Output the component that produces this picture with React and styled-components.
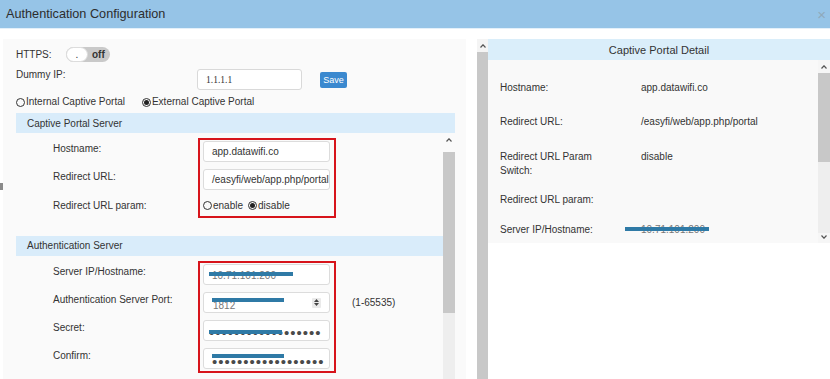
import React from "react";
import styled, { createGlobalStyle } from "styled-components";

const GlobalStyle = createGlobalStyle`
  html, body {
    margin: 0;
    padding: 0;
    background: #fff;
  }
  body {
    font-family: "Liberation Sans", Arial, sans-serif;
    color: #333;
  }
`;

const Modal = styled.div`
  position: relative;
  width: 830px;
  height: 379px;
  overflow: hidden;
  background: #fff;
  display: flex;
  flex-direction: column;
`;

const Header = styled.header`
  height: 28px;
  flex: none;
  background: #96c4e7;
  border-bottom: 1px solid #e3f0fa;
  display: flex;
  align-items: center;
  justify-content: space-between;
  padding: 0 4px 0 6px;
`;

const Title = styled.h1`
  margin: 0;
  font-size: 12.7px;
  font-weight: normal;
  color: #2d2d2d;
`;

const Close = styled.span`
  font-size: 15px;
  line-height: 1;
  color: #8fa9bb;
`;

const Body = styled.div`
  flex: 1;
  min-height: 0;
  display: flex;
  padding: 10px 0 0 3px;
`;

const LeftPanel = styled.section`
  width: 463px;
  flex: none;
  background: #fafafa;
  padding: 8px 11px 0 13px;
  box-sizing: border-box;
  display: flex;
  flex-direction: column;
`;

const TopRow = styled.div`
  display: flex;
  align-items: center;
  margin-top: ${(p) => p.$mt || 0}px;
  height: ${(p) => p.$h}px;
  font-size: 10px;
`;

const TopLabel = styled.span`
  width: ${(p) => p.$w}px;
  flex: none;
  align-self: ${(p) => (p.$top ? "flex-start" : "center")};
  line-height: 12px;
`;

const Toggle = styled.span`
  width: 44px;
  height: 15px;
  border-radius: 8px;
  background: #c9c9c9;
  display: flex;
  align-items: center;
  font-size: 10px;
  font-weight: bold;
  color: #333;
`;

const Knob = styled.span`
  width: 22px;
  height: 15px;
  box-sizing: border-box;
  border: 1px solid #dcdcdc;
  border-radius: 8px;
  background: #fff;
  display: flex;
  justify-content: center;
  align-items: flex-end;
  padding-bottom: 2px;
  line-height: 8px;
  font-weight: normal;
  margin-right: 4px;
`;

const PlainInput = styled.div`
  width: 105px;
  height: 21px;
  box-sizing: border-box;
  border: 1px solid #d9d9d9;
  border-radius: 3px;
  background: #fff;
  padding: 0 8px;
  display: flex;
  align-items: center;
  font-family: "Liberation Serif", "Times New Roman", serif;
  font-size: 9.5px;
  color: #333;
`;

const SaveButton = styled.button`
  margin-left: 18px;
  width: 27px;
  height: 16px;
  padding: 0;
  border: none;
  border-radius: 2px;
  background: #3b89cf;
  color: #fff;
  font-family: inherit;
  font-size: 9px;
`;

const RadioGroup = styled.div`
  display: flex;
  align-items: center;
  gap: ${(p) => p.$gap}px;
  font-size: 10px;
  line-height: 12px;
`;

const RadioItem = styled.span`
  display: inline-flex;
  align-items: center;
`;

const RadioDot = styled.span`
  width: 9px;
  height: 9px;
  box-sizing: border-box;
  border: 1px solid #333;
  border-radius: 50%;
  display: inline-flex;
  align-items: center;
  justify-content: center;
  margin-right: 1px;

  &::after {
    content: "";
    width: 5px;
    height: 5px;
    border-radius: 50%;
    background: ${(p) => (p.$checked ? "#222" : "transparent")};
  }
`;

const SectionHead = styled.div`
  height: 20px;
  flex: none;
  margin-top: ${(p) => p.$mt || 0}px;
  background: #d9ecfa;
  padding-left: 11px;
  display: flex;
  align-items: center;
  font-size: 10px;
  color: #333;
`;

const ScrollArea = styled.div`
  flex: 1;
  min-height: 0;
  display: flex;
  overflow: hidden;
`;

const ScrollContent = styled.div`
  flex: 1;
  padding-top: 8px;
  display: flex;
  flex-direction: column;
`;

const ScrollBar = styled.div`
  width: ${(p) => p.$w || 12}px;
  flex: none;
  display: flex;
  flex-direction: column;
`;

const ArrowBtn = styled.div`
  height: ${(p) => p.$h}px;
  flex: none;
  background: ${(p) => p.$bg || "#f6f6f6"};
  display: flex;
  justify-content: center;
  align-items: ${(p) => (p.$down ? "flex-end" : "flex-start")};
  padding: ${(p) => (p.$down ? "0 0 4px" : "5px 0 0")};
  box-sizing: border-box;
`;

const Thumb = styled.div`
  height: ${(p) => p.$h}px;
  flex: ${(p) => (p.$h ? "none" : "1")};
  background: #c8c8c8;
`;

const Track = styled.div`
  flex: 1;
  background: #eeeeee;
`;

const Group = styled.div`
  display: grid;
  grid-template-columns: 182px 138px auto;
  grid-template-rows: ${(p) => p.$rows};
  row-gap: 7.3px;
  margin-top: ${(p) => p.$mt || 0}px;
`;

const FieldLabel = styled.span`
  grid-column: 1;
  padding-left: 37px;
  font-size: 10px;
  line-height: 12px;
  padding-top: 2px;
  white-space: nowrap;
`;

const Outline = styled.div`
  grid-column: 2;
  grid-row: 1 / -1;
  border: 2px solid #d7141b;
  margin: -3px 0 -4px 0;
  pointer-events: none;
`;

const Field = styled.div`
  grid-column: 2;
  position: relative;
  margin-left: 5px;
  width: 127px;
  height: 21px;
  box-sizing: border-box;
  border: 1px solid #dcdcdc;
  border-radius: 3px;
  background: #fff;
  padding-left: ${(p) => p.$pl || 8}px;
  display: flex;
  align-items: center;
  overflow: hidden;
  white-space: nowrap;
  font-size: 10px;
  color: #333;
`;

const RadioCell = styled.div`
  grid-column: 2;
  margin-left: 5px;
  display: flex;
  align-items: center;
`;

const Dots = styled.span`
  font-size: 15px;
  letter-spacing: 1px;
  color: #4a4a4a;
  padding-top: ${(p) => p.$pt || 4}px;
`;

const Faint = styled.span`
  color: #777;
  padding-top: ${(p) => p.$pt || 0}px;
`;

const Redact = styled.span`
  position: absolute;
  left: ${(p) => p.$l}px;
  top: ${(p) => p.$t}px;
  width: ${(p) => p.$w}px;
  height: 4px;
  background: #2f7aa6;
`;

const Spinner = styled.span`
  position: absolute;
  right: 8px;
  top: 5px;
  width: 9px;
  height: 10px;
  background: #eaeaea;
  border-radius: 1px;
  display: flex;
  flex-direction: column;
  align-items: center;
  justify-content: center;
  gap: 1px;
`;

const Hint = styled.span`
  grid-column: 3;
  margin-left: 16px;
  font-size: 10px;
  align-self: center;
`;

const RightWrap = styled.div`
  flex: 1;
  display: flex;
  margin-left: 11px;
`;

const Detail = styled.section`
  flex: 1;
  display: flex;
  flex-direction: column;
`;

const DetailHead = styled.div`
  height: 21px;
  flex: none;
  background: #daeefa;
  display: flex;
  align-items: center;
  justify-content: center;
  font-size: 11px;
  color: #333;
`;

const DetailBox = styled.div`
  height: 183px;
  flex: none;
  background: #f9f9f9;
  display: flex;
  overflow: hidden;
`;

const DetailRows = styled.div`
  flex: 1;
  padding: 11px 0 0 12px;
`;

const DetailRow = styled.div`
  display: grid;
  grid-template-columns: 120px 1fr;
  column-gap: 21px;
  padding: ${(p) => p.$pt}px 0 ${(p) => p.$pb}px;
  font-size: 10px;
  line-height: 14px;
  color: #333;
`;

const DetailValue = styled.span`
  position: relative;
`;

const Grip = styled.span`
  position: absolute;
  left: 0;
  top: 183px;
  width: 3px;
  height: 7px;
  background: #8a8a8a;
`;

const Caret = ({ down }) => (
  <svg width="6" height="4" viewBox="0 0 6 4">
    <polyline
      points={down ? "0.5,0.5 3,3.2 5.5,0.5" : "0.5,3.5 3,0.8 5.5,3.5"}
      fill="none"
      stroke="#555"
      strokeWidth="1.2"
    />
  </svg>
);

const Radio = ({ checked, children }) => (
  <RadioItem>
    <RadioDot $checked={checked} />
    {children}
  </RadioItem>
);

const details = [
  { label: "Hostname:", value: "app.datawifi.co", pt: 10, pb: 10 },
  { label: "Redirect URL:", value: "/easyfi/web/app.php/portal", pt: 10, pb: 10 },
  { label: "Redirect URL Param Switch:", value: "disable", pt: 11, pb: 7 },
  { label: "Redirect URL param:", value: "", pt: 8, pb: 8 },
  { label: "Server IP/Hostname:", value: "redacted", pt: 8, pb: 8 },
];

const DOTS = "••••••••••••••••••";

const App = () => {
  return (
    <Modal>
      <GlobalStyle />
      <Header>
        <Title>Authentication Configuration</Title>
        <Close>×</Close>
      </Header>
      <Body>
        <LeftPanel>
          <TopRow $h={15}>
            <TopLabel $w={50}>HTTPS:</TopLabel>
            <Toggle>
              <Knob>.</Knob>
              off
            </Toggle>
          </TopRow>
          <TopRow $h={21} $mt={7}>
            <TopLabel $w={181} $top>
              Dummy IP:
            </TopLabel>
            <PlainInput>1.1.1.1</PlainInput>
            <SaveButton>Save</SaveButton>
          </TopRow>
          <TopRow $h={12} $mt={6}>
            <RadioGroup $gap={17}>
              <Radio>Internal Captive Portal</Radio>
              <Radio checked>External Captive Portal</Radio>
            </RadioGroup>
          </TopRow>
          <SectionHead $mt={5}>Captive Portal Server</SectionHead>
          <ScrollArea>
            <ScrollContent>
              <Group $rows="21px 21px 16px">
                <Outline />
                <FieldLabel style={{ gridRow: 1 }}>Hostname:</FieldLabel>
                <Field style={{ gridRow: 1 }}>app.datawifi.co</Field>
                <FieldLabel style={{ gridRow: 2 }}>Redirect URL:</FieldLabel>
                <Field style={{ gridRow: 2 }}>/easyfi/web/app.php/portal</Field>
                <FieldLabel style={{ gridRow: 3 }}>Redirect URL param:</FieldLabel>
                <RadioCell style={{ gridRow: 3 }}>
                  <RadioGroup $gap={5}>
                    <Radio>enable</Radio>
                    <Radio checked>disable</Radio>
                  </RadioGroup>
                </RadioCell>
              </Group>
              <SectionHead $mt={22}>Authentication Server</SectionHead>
              <Group $rows="21px 21px 21px 21px" $mt={8}>
                <Outline />
                <FieldLabel style={{ gridRow: 1 }}>Server IP/Hostname:</FieldLabel>
                <Field style={{ gridRow: 1 }}>
                  <Faint $pt={3}>10.71.101.200</Faint>
                  <Redact $l={5} $t={7} $w={84} />
                </Field>
                <FieldLabel style={{ gridRow: 2 }}>
                  Authentication Server Port:
                </FieldLabel>
                <Field style={{ gridRow: 2 }} $pl={9}>
                  <Faint $pt={6}>1812</Faint>
                  <Redact $l={8} $t={5} $w={72} />
                  <Spinner>
                    <svg width="5" height="3" viewBox="0 0 5 3">
                      <polygon points="0,3 2.5,0 5,3" fill="#444" />
                    </svg>
                    <svg width="5" height="3" viewBox="0 0 5 3">
                      <polygon points="0,0 2.5,3 5,0" fill="#444" />
                    </svg>
                  </Spinner>
                </Field>
                <Hint style={{ gridRow: 2 }}>(1-65535)</Hint>
                <FieldLabel style={{ gridRow: 3 }}>Secret:</FieldLabel>
                <Field style={{ gridRow: 3 }} $pl={5}>
                  <Dots>{DOTS}</Dots>
                  <Redact $l={5} $t={9} $w={73} />
                </Field>
                <FieldLabel style={{ gridRow: 4 }}>Confirm:</FieldLabel>
                <Field style={{ gridRow: 4 }} $pl={8}>
                  <Dots $pt={6}>{DOTS}</Dots>
                  <Redact $l={8} $t={5} $w={72} />
                </Field>
              </Group>
            </ScrollContent>
            <ScrollBar>
              <ArrowBtn $h={19} $bg="#fafafa">
                <Caret />
              </ArrowBtn>
              <Thumb $h={161} />
              <Track />
            </ScrollBar>
          </ScrollArea>
        </LeftPanel>
        <RightWrap>
          <ScrollBar $w={11}>
            <ArrowBtn $h={13} $bg="#f4f4f4">
              <Caret />
            </ArrowBtn>
            <Thumb />
          </ScrollBar>
          <Detail>
            <DetailHead>Captive Portal Detail</DetailHead>
            <DetailBox>
              <DetailRows>
                {details.map((d) => (
                  <DetailRow key={d.label} $pt={d.pt} $pb={d.pb}>
                    <span>{d.label}</span>
                    <DetailValue>
                      {d.value === "redacted" ? (
                        <>
                          <Faint>10.71.101.200</Faint>
                          <Redact $l={-16} $t={4} $w={84} />
                        </>
                      ) : (
                        d.value
                      )}
                    </DetailValue>
                  </DetailRow>
                ))}
              </DetailRows>
              <ScrollBar>
                <ArrowBtn $h={13}>
                  <Caret />
                </ArrowBtn>
                <Thumb $h={89} />
                <Track />
                <ArrowBtn $h={10} $down>
                  <Caret down />
                </ArrowBtn>
              </ScrollBar>
            </DetailBox>
          </Detail>
        </RightWrap>
      </Body>
      <Grip />
    </Modal>
  );
};

export default App;
